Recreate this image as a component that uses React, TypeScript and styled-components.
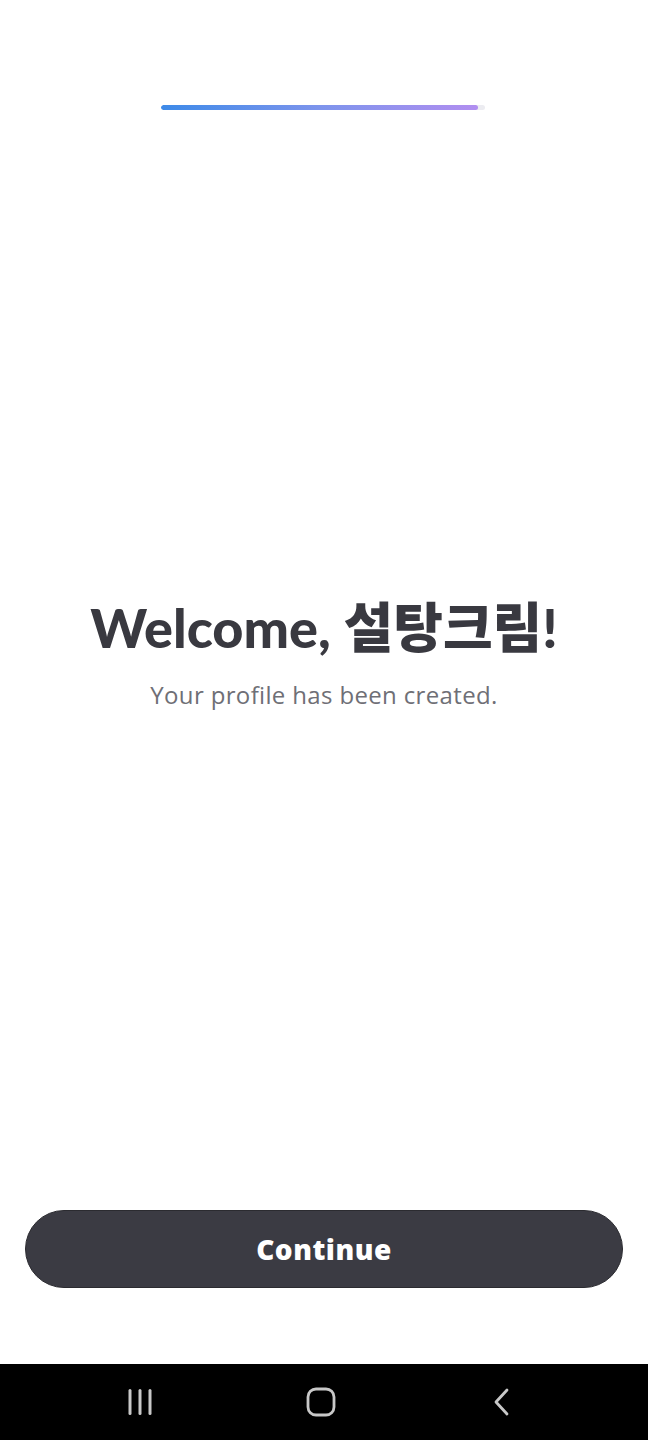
import React from "react";
import styled, { createGlobalStyle } from "styled-components";

const Global = createGlobalStyle`
  html, body { margin: 0; padding: 0; background: #ffffff; }
  body { font-family: Lato, "Noto Sans CJK KR", sans-serif; }
  * { box-sizing: border-box; }
`;

const Screen = styled.div`
  width: 648px;
  height: 1440px;
  display: flex;
  flex-direction: column;
  background: #ffffff;
`;

const Main = styled.div`
  flex: 1;
  display: flex;
  flex-direction: column;
  align-items: center;
  padding-top: 105px;
`;

const Track = styled.div`
  width: 324px;
  height: 5px;
  border-radius: 3px;
  background: #ececf1;
  overflow: hidden;
  margin-left: -2px;
`;

const Fill = styled.div`
  height: 100%;
  border-radius: 3px;
  background: linear-gradient(90deg, #3d8ae8 0%, #7d94ec 50%, #b18ef0 100%);
`;

const Center = styled.div`
  margin-top: 486px;
  display: flex;
  flex-direction: column;
  align-items: center;
`;

const Title = styled.h1`
  margin: 0;
  font-family: Lato, "Noto Sans CJK KR", sans-serif;
  font-weight: 900;
  font-size: 54px;
  line-height: 64px;
  color: #393940;
  letter-spacing: 0;
`;

const Subtitle = styled.p`
  margin: 20px 0 0;
  font-family: "Open Sans", sans-serif;
  font-size: 24px;
  line-height: 30px;
  color: #6f6f76;
  letter-spacing: 0.35px;
`;

const Footer = styled.div`
  padding: 0 25px 76px;
`;

const Button = styled.button`
  width: 100%;
  height: 78px;
  border-radius: 39px;
  border: 1.5px solid #2b2b30;
  background: #3b3b43;
  color: #ffffff;
  font-family: "Open Sans", sans-serif;
  font-weight: 800;
  font-size: 28px;
  letter-spacing: 0.5px;
  display: flex;
  align-items: center;
  justify-content: center;
  padding-bottom: 2px;
`;

const NavBar = styled.div`
  height: 76px;
  background: #000000;
  display: grid;
  grid-template-columns: repeat(3, 181px);
  justify-content: center;
  align-items: center;
  justify-items: center;
  padding-right: 6px;
`;

const NavIcon = styled.svg`
  display: block;
`;

export default function App() {
  return (
    <>
      <Global />
      <Screen>
        <Main>
          <Track>
            <Fill style={{ width: `${(317 / 324) * 100}%` }} />
          </Track>
          <Center>
            <Title>Welcome, 설탕크림!</Title>
            <Subtitle>Your profile has been created.</Subtitle>
          </Center>
        </Main>
        <Footer>
          <Button>Continue</Button>
        </Footer>
        <NavBar>
          <NavIcon width="26" height="28" viewBox="0 0 26 28">
            <g stroke="#c8c8c8" strokeWidth="3" strokeLinecap="round">
              <line x1="3" y1="2.5" x2="3" y2="25.5" />
              <line x1="13" y1="2.5" x2="13" y2="25.5" />
              <line x1="23" y1="2.5" x2="23" y2="25.5" />
            </g>
          </NavIcon>
          <NavIcon width="30" height="30" viewBox="0 0 30 30">
            <rect x="2" y="2" width="26" height="26" rx="8" fill="none" stroke="#c8c8c8" strokeWidth="2.8" />
          </NavIcon>
          <NavIcon width="20" height="30" viewBox="0 0 20 30">
            <polyline points="15,3 4,15 15,27" fill="none" stroke="#c8c8c8" strokeWidth="2.8" strokeLinecap="round" strokeLinejoin="round" />
          </NavIcon>
        </NavBar>
      </Screen>
    </>
  );
}
